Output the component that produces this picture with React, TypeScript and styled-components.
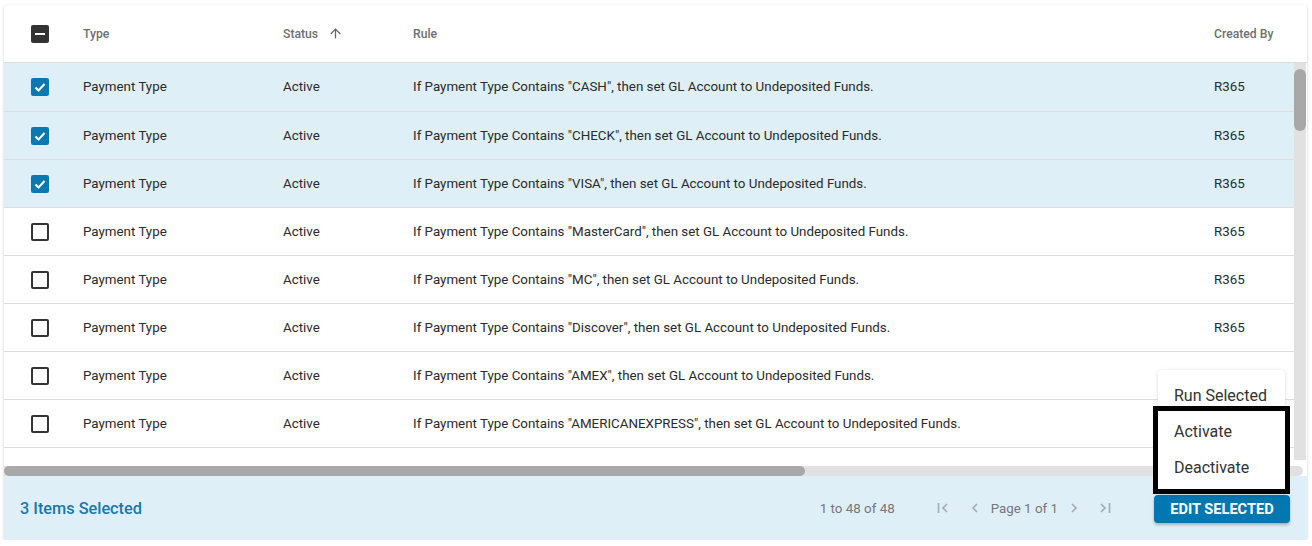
import styled, { createGlobalStyle } from "styled-components";
import { ArrowUp } from "lucide-react";

const GlobalStyle = createGlobalStyle`
  body {
    margin: 0;
    background: #ffffff;
    font-family: Roboto, "Liberation Sans", Arial, sans-serif;
  }
`;

const rules = [
  { label: "CASH", checked: true },
  { label: "CHECK", checked: true },
  { label: "VISA", checked: true },
  { label: "MasterCard", checked: false },
  { label: "MC", checked: false },
  { label: "Discover", checked: false },
  { label: "AMEX", checked: false },
  { label: "AMERICANEXPRESS", checked: false },
];

const Chevron = ({ dir, bar }: { dir: "left" | "right"; bar?: boolean }) => (
  <svg width="14" height="14" viewBox="0 0 14 14" fill="none">
    {dir === "left" ? (
      <>
        {bar && <line x1="2.5" y1="2" x2="2.5" y2="12" stroke="#a9a9a9" strokeWidth="1.6" />}
        <polyline points={bar ? "11,3 7,7 11,11" : "9,3 5,7 9,11"} stroke="#a9a9a9" strokeWidth="1.6" />
      </>
    ) : (
      <>
        <polyline points={bar ? "3,3 7,7 3,11" : "5,3 9,7 5,11"} stroke="#a9a9a9" strokeWidth="1.6" />
        {bar && <line x1="11.5" y1="2" x2="11.5" y2="12" stroke="#a9a9a9" strokeWidth="1.6" />}
      </>
    )}
  </svg>
);

const CheckBox = ({ state }: { state: "on" | "off" | "partial" }) => (
  <Box $state={state}>
    {state === "on" && (
      <svg width="14" height="14" viewBox="0 0 14 14" fill="none">
        <polyline points="2.5,7.5 5.5,10.5 11.5,4" stroke="#fff" strokeWidth="2" />
      </svg>
    )}
    {state === "partial" && <Dash />}
  </Box>
);

export default function App() {
  return (
    <Page>
      <GlobalStyle />
      <Card>
        <HeaderRow>
          <CheckCell>
            <CheckBox state="partial" />
          </CheckCell>
          <HeadCell>Type</HeadCell>
          <HeadCell>
            Status
            <SortIcon>
              <ArrowUp size={15} strokeWidth={2} color="#666" />
            </SortIcon>
          </HeadCell>
          <HeadCell>Rule</HeadCell>
          <HeadCell>Created By</HeadCell>
        </HeaderRow>

        <Viewport>
          <Rows>
            {rules.map((r) => (
              <Row key={r.label} $selected={r.checked}>
                <CheckCell>
                  <CheckBox state={r.checked ? "on" : "off"} />
                </CheckCell>
                <Cell>Payment Type</Cell>
                <Cell>Active</Cell>
                <Cell>
                  If Payment Type Contains "{r.label}", then set GL Account to Undeposited Funds.
                </Cell>
                <Cell>R365</Cell>
              </Row>
            ))}
          </Rows>
          <VTrack>
            <VThumb />
          </VTrack>
        </Viewport>

        <HTrack>
          <HThumb />
        </HTrack>

        <Footer>
          <SelectedCount>3 Items Selected</SelectedCount>
          <Summary>1 to 48 of 48</Summary>
          <PageIcon $gap={40}>
            <Chevron dir="left" bar />
          </PageIcon>
          <PageIcon $gap={16}>
            <Chevron dir="left" />
          </PageIcon>
          <PageText>Page 1 of 1</PageText>
          <PageIcon $gap={8}>
            <Chevron dir="right" />
          </PageIcon>
          <PageIcon $gap={15}>
            <Chevron dir="right" bar />
          </PageIcon>
          <ActionWrap>
            <Menu>
              <MenuItem>Run Selected</MenuItem>
              <Highlight>
                <MenuItem>Activate</MenuItem>
                <MenuItem>Deactivate</MenuItem>
              </Highlight>
            </Menu>
            <EditButton>Edit Selected</EditButton>
          </ActionWrap>
        </Footer>
      </Card>
    </Page>
  );
}

const Page = styled.div`
  padding: 5px 5px 0 4px;
`;

const Card = styled.div`
  width: 1303px;
  background: #ffffff;
  border-radius: 4px;
  box-shadow: 0 1px 3px rgba(0, 0, 0, 0.22);
`;

const gridCols = `79px 200px 130px 801px 1fr`;

const HeaderRow = styled.div`
  display: grid;
  grid-template-columns: ${gridCols};
  align-items: center;
  height: 57px;
  border-bottom: 1px solid #dcdcdc;
`;

const HeadCell = styled.div`
  display: flex;
  align-items: center;
  font-size: 12.2px;
  font-weight: 500;
  color: #6f6f6f;
`;

const SortIcon = styled.span`
  display: inline-flex;
  margin-left: 10px;
`;

const CheckCell = styled.div`
  padding-left: 27px;
  display: flex;
  align-items: center;
`;

const Box = styled.div<{ $state: string }>`
  width: 18px;
  height: 18px;
  box-sizing: border-box;
  border-radius: 2px;
  display: flex;
  align-items: center;
  justify-content: center;
  background: ${(p) =>
    p.$state === "on" ? "#0b78b1" : p.$state === "partial" ? "#333333" : "#ffffff"};
  border: ${(p) => (p.$state === "off" ? "2px solid #333333" : "none")};
`;

const Dash = styled.div`
  width: 10px;
  height: 2px;
  background: #ffffff;
`;

const Viewport = styled.div`
  display: flex;
  height: 397px;
  overflow: hidden;
`;

const Rows = styled.div`
  flex: 1;
`;

const Row = styled.div<{ $selected: boolean }>`
  display: grid;
  grid-template-columns: ${gridCols};
  align-items: center;
  height: 47px;
  border-bottom: 1px solid #dedede;
  background: ${(p) => (p.$selected ? "#deeff7" : "#ffffff")};

  &:first-child {
    height: 49px;
    padding-bottom: 1px;
    box-sizing: border-box;
  }
`;

const Cell = styled.div`
  font-size: 13.35px;
  color: #2b2b2b;
  white-space: nowrap;
`;

const VTrack = styled.div`
  width: 12px;
  margin-right: 1px;
  background: #e1e1e1;
  padding-top: 6px;
  box-sizing: border-box;
`;

const VThumb = styled.div`
  height: 62px;
  border-radius: 6px;
  background: #a8a8a8;
`;

const HTrack = styled.div`
  margin: 6px 4px 0 0;
  height: 10px;
  background: #e1e1e1;
  border-radius: 0 5px 5px 0;
`;

const HThumb = styled.div`
  width: 801px;
  height: 10px;
  border-radius: 5px;
  background: #a8a8a8;
`;

const Footer = styled.div`
  display: flex;
  align-items: center;
  height: 64px;
  padding: 0 17px 0 16px;
  background: #dfeff7;
  border-radius: 0 0 4px 4px;
`;

const SelectedCount = styled.div`
  font-size: 16.3px;
  font-weight: 500;
  color: #1977ad;
`;

const Summary = styled.div`
  margin-left: auto;
  font-size: 13.35px;
  color: #777777;
`;

const PageIcon = styled.div<{ $gap: number }>`
  margin-left: ${(p) => p.$gap}px;
  width: 16px;
  display: flex;
  justify-content: center;
`;

const PageText = styled.div`
  margin-left: 8px;
  font-size: 13.35px;
  color: #777777;
`;

const ActionWrap = styled.div`
  position: relative;
  margin-left: 41px;
  padding-top: 2px;
`;

const EditButton = styled.button`
  display: block;
  width: 136px;
  height: 28px;
  padding: 0;
  border: none;
  border-radius: 4px;
  background: #0277b0;
  color: #ffffff;
  font-family: Roboto, "Liberation Sans", Arial, sans-serif;
  font-size: 14.6px;
  font-weight: 700;
  text-transform: uppercase;
  box-shadow: 0 2px 3px rgba(0, 0, 0, 0.25);
`;

const Menu = styled.div`
  position: absolute;
  right: 5px;
  bottom: calc(100% - 1px);
  width: 127px;
  padding-top: 7px;
  background: #ffffff;
  border-radius: 4px;
  box-shadow: 0 1px 4px rgba(0, 0, 0, 0.15);
  z-index: 5;
`;

const MenuItem = styled.div`
  height: 36px;
  padding-left: 16px;
  display: flex;
  align-items: center;
  font-size: 16px;
  color: #333333;
`;

const Highlight = styled.div`
  margin: -7px -5px 0;
  padding: 2px 0 4px;
  border: 5px solid #000000;
  background: #ffffff;
`;
